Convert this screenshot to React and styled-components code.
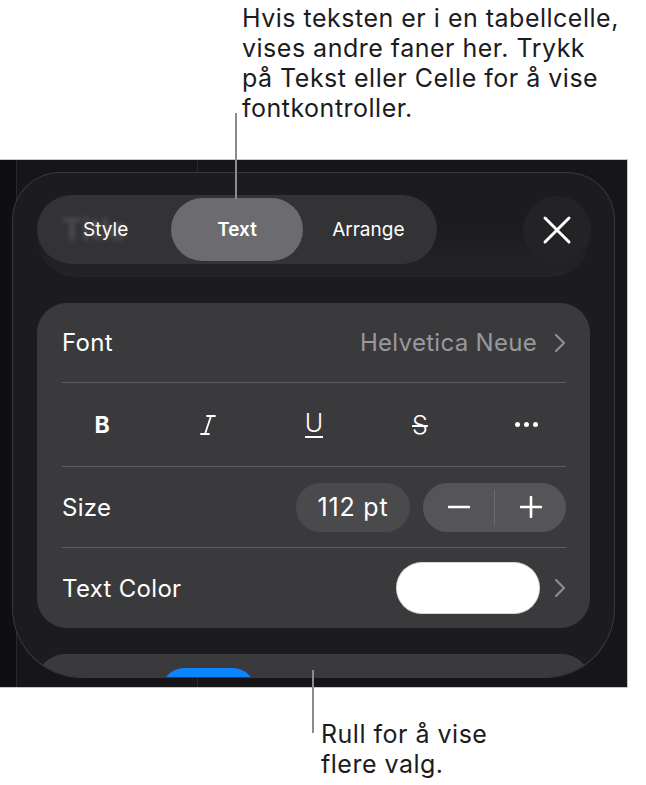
import React from 'react'
import styled, { createGlobalStyle } from 'styled-components'

const GlobalStyle = createGlobalStyle`
  html, body {
    margin: 0;
    padding: 0;
    background: #ffffff;
  }
  body {
    font-family: Inter, "Noto Sans", sans-serif;
    -webkit-font-smoothing: antialiased;
  }
`

const Page = styled.div`
  position: relative;
  width: 646px;
  height: 785px;
  overflow: hidden;
  display: flex;
  flex-direction: column;
`

const Callout = styled.p`
  margin: ${p => p.$top}px 0 0 0;
  padding-left: ${p => p.$left}px;
  font-size: 25px;
  line-height: 30px;
  letter-spacing: 0.5px;
  color: #1c1c1e;
`

// leader lines cross from the callout into the screenshot
const Leader = styled.div`
  position: absolute;
  left: ${p => p.$x}px;
  top: ${p => p.$y}px;
  width: 2px;
  height: ${p => p.$h}px;
  background: #8c8c8c;
  z-index: 5;
`

const Frame = styled.div`
  box-sizing: border-box;
  width: 628px;
  height: 529px;
  margin-top: 36px;
  border: 1px solid #c8c8c8;
  border-left: none;
  padding: 12px 12px 9px 12px;
  display: flex;
  background: linear-gradient(
    to right,
    #0f0f11 0 16px,
    #29292b 16px 17px,
    #161618 17px 197px,
    #29292c 197px 198px,
    #161618 198px
  );
`

const Sheet = styled.div`
  flex: 1;
  display: flex;
  flex-direction: column;
  padding: 22px 24px 0 24px;
  border: 1px solid rgba(255, 255, 255, 0.13);
  border-radius: 48px 48px 70px 70px;
  background: #1c1c1e;
  overflow: hidden;
`

const Header = styled.div`
  display: flex;
  align-items: center;
  justify-content: space-between;
  padding-bottom: 13px;
  border-radius: 0 0 40px 40px;
  background: linear-gradient(rgba(255, 255, 255, 0) 40%, rgba(255, 255, 255, 0.035));
`

const Segmented = styled.div`
  box-sizing: border-box;
  width: 400px;
  height: 69px;
  padding: 3px;
  border-radius: 35px;
  background: #333336;
  display: grid;
  grid-template-columns: repeat(3, 1fr);
`

const Segment = styled.div`
  position: relative;
  display: flex;
  align-items: center;
  justify-content: center;
  border-radius: 32px;
  font-size: 19px;
  font-weight: ${p => (p.$active ? 600 : 400)};
  color: #ffffff;
  background: ${p => (p.$active ? '#6c6c70' : 'transparent')};

  /* the blurred page title that shows through the glass */
  &::before {
    content: ${p => (p.$ghost ? `'${p.$ghost}'` : 'none')};
    position: absolute;
    left: 22px;
    top: 13px;
    font-size: 30px;
    font-weight: 700;
    color: rgba(255, 255, 255, 0.13);
    filter: blur(2px);
  }
`

const Label = styled.span`
  position: relative;
`

const CloseButton = styled.div`
  width: 68px;
  height: 68px;
  margin-right: -1px;
  border-radius: 50%;
  background: #232325;
  display: flex;
  align-items: center;
  justify-content: center;
`

const Card = styled.div`
  flex-shrink: 0;
  margin-top: 26px;
  padding: 0 24px 0 25px;
  border-radius: 30px;
  background: #3a3a3c;
  display: flex;
  flex-direction: column;
`

const Row = styled.div`
  height: ${p => p.$h}px;
  display: flex;
  align-items: center;
  justify-content: space-between;
  font-size: 24px;
  letter-spacing: 0.3px;
  color: #ffffff;
  border-bottom: ${p => (p.$last ? 'none' : '1px solid #5c5c5f')};
`

const Value = styled.div`
  display: flex;
  align-items: center;
  gap: ${p => p.$gap || 17}px;
  color: #98989e;
`

const Formats = styled.div`
  height: 83px;
  padding: 0 18px;
  display: flex;
  align-items: center;
  justify-content: space-between;
  border-bottom: 1px solid #5c5c5f;
`

const FormatButton = styled.div`
  width: 44px;
  display: flex;
  align-items: center;
  justify-content: center;
  color: #ffffff;
  font-size: 25px;
`

const Bold = styled.span`
  font-size: 23px;
  font-weight: 700;
`

const Under = styled.span`
  line-height: 23px;
  font-weight: 300;
  padding-bottom: 1px;
  border-bottom: 2px solid #ffffff;
`

const Strike = styled.span`
  font-weight: 300;
  text-decoration: line-through;
  text-decoration-thickness: 2px;
`

const Dots = styled.div`
  display: flex;
  gap: 4px;
  span {
    width: 5px;
    height: 5px;
    border-radius: 50%;
    background: #ffffff;
  }
`

const Controls = styled.div`
  display: flex;
  align-items: center;
  gap: 13px;
`

const SizePill = styled.div`
  width: 114px;
  height: 49px;
  border-radius: 25px;
  background: #4a4a4d;
  display: flex;
  align-items: center;
  justify-content: center;
  font-size: 25px;
  letter-spacing: 0.8px;
  color: #ffffff;
`

const Stepper = styled.div`
  width: 143px;
  height: 49px;
  border-radius: 25px;
  background: #555558;
  display: grid;
  grid-template-columns: 1fr 1px 1fr;
  align-items: center;
`

const StepButton = styled.div`
  display: flex;
  align-items: center;
  justify-content: center;
`

const StepDivider = styled.div`
  height: 35px;
  background: #6e6e72;
`

const Swatch = styled.div`
  width: 144px;
  height: 52px;
  border-radius: 26px;
  background: #ffffff;
  box-shadow: inset 0 0 0 1px rgba(0, 0, 0, 0.15);
`

const NextCard = styled.div`
  flex-shrink: 0;
  height: 60px;
  margin-top: 26px;
  padding: 14px 0 0 125px;
  border-radius: 28px 28px 0 0;
  background: #3a3a3c;
`

const BlueTab = styled.div`
  width: 93px;
  height: 40px;
  border-radius: 22px 22px 0 0;
  background: #0a84ff;
`

const Chevron = ({ color = '#8e8e93' }) => (
  <svg width="12" height="20" viewBox="0 0 12 20">
    <polyline points="2,2 10,10 2,18" fill="none" stroke={color} strokeWidth="2.2" strokeLinecap="round" strokeLinejoin="round" />
  </svg>
)

const CloseIcon = () => (
  <svg width="30" height="30" viewBox="0 0 30 30">
    <path d="M3 3 L27 27 M27 3 L3 27" stroke="#ffffff" strokeWidth="3" strokeLinecap="round" />
  </svg>
)

const ItalicIcon = () => (
  <svg width="18" height="22" viewBox="0 0 18 22">
    <path d="M8 2 H16 M2 20 H10 M12 2 L6 20" fill="none" stroke="#ffffff" strokeWidth="1.8" strokeLinecap="round" />
  </svg>
)

const MinusIcon = () => (
  <svg width="22" height="22" viewBox="0 0 22 22">
    <path d="M1 11 H21" stroke="#ffffff" strokeWidth="2.6" strokeLinecap="round" />
  </svg>
)

const PlusIcon = () => (
  <svg width="22" height="22" viewBox="0 0 22 22">
    <path d="M1 11 H21 M11 1 V21" stroke="#ffffff" strokeWidth="2.6" strokeLinecap="round" />
  </svg>
)

const App = () => {
  return (
    <Page>
      <GlobalStyle />
      <Leader $x={235} $y={113} $h={86} />
      <Leader $x={312} $y={670} $h={63} />

      <Callout $top={3} $left={242}>
        Hvis teksten er i en tabellcelle,<br />
        vises andre faner her. Trykk<br />
        på Tekst eller Celle for å vise<br />
        fontkontroller.
      </Callout>

      <Frame>
        <Sheet>
          <Header>
            <Segmented>
              <Segment $ghost="Title">
                <Label>Style</Label>
              </Segment>
              <Segment $active>Text</Segment>
              <Segment>Arrange</Segment>
            </Segmented>
            <CloseButton>
              <CloseIcon />
            </CloseButton>
          </Header>

          <Card>
            <Row $h={79}>
              <span>Font</span>
              <Value>
                Helvetica Neue
                <Chevron />
              </Value>
            </Row>
            <Formats>
              <FormatButton><Bold>B</Bold></FormatButton>
              <FormatButton><ItalicIcon /></FormatButton>
              <FormatButton><Under>U</Under></FormatButton>
              <FormatButton><Strike>S</Strike></FormatButton>
              <FormatButton>
                <Dots><span /><span /><span /></Dots>
              </FormatButton>
            </Formats>
            <Row $h={80}>
              <span>Size</span>
              <Controls>
                <SizePill>112 pt</SizePill>
                <Stepper>
                  <StepButton><MinusIcon /></StepButton>
                  <StepDivider />
                  <StepButton><PlusIcon /></StepButton>
                </Stepper>
              </Controls>
            </Row>
            <Row $h={80} $last>
              <span>Text Color</span>
              <Value $gap={14}>
                <Swatch />
                <Chevron />
              </Value>
            </Row>
          </Card>

          <NextCard>
            <BlueTab />
          </NextCard>
        </Sheet>
      </Frame>

      <Callout $top={31} $left={321}>
        Rull for å vise<br />
        flere valg.
      </Callout>
    </Page>
  )
}

export default App
